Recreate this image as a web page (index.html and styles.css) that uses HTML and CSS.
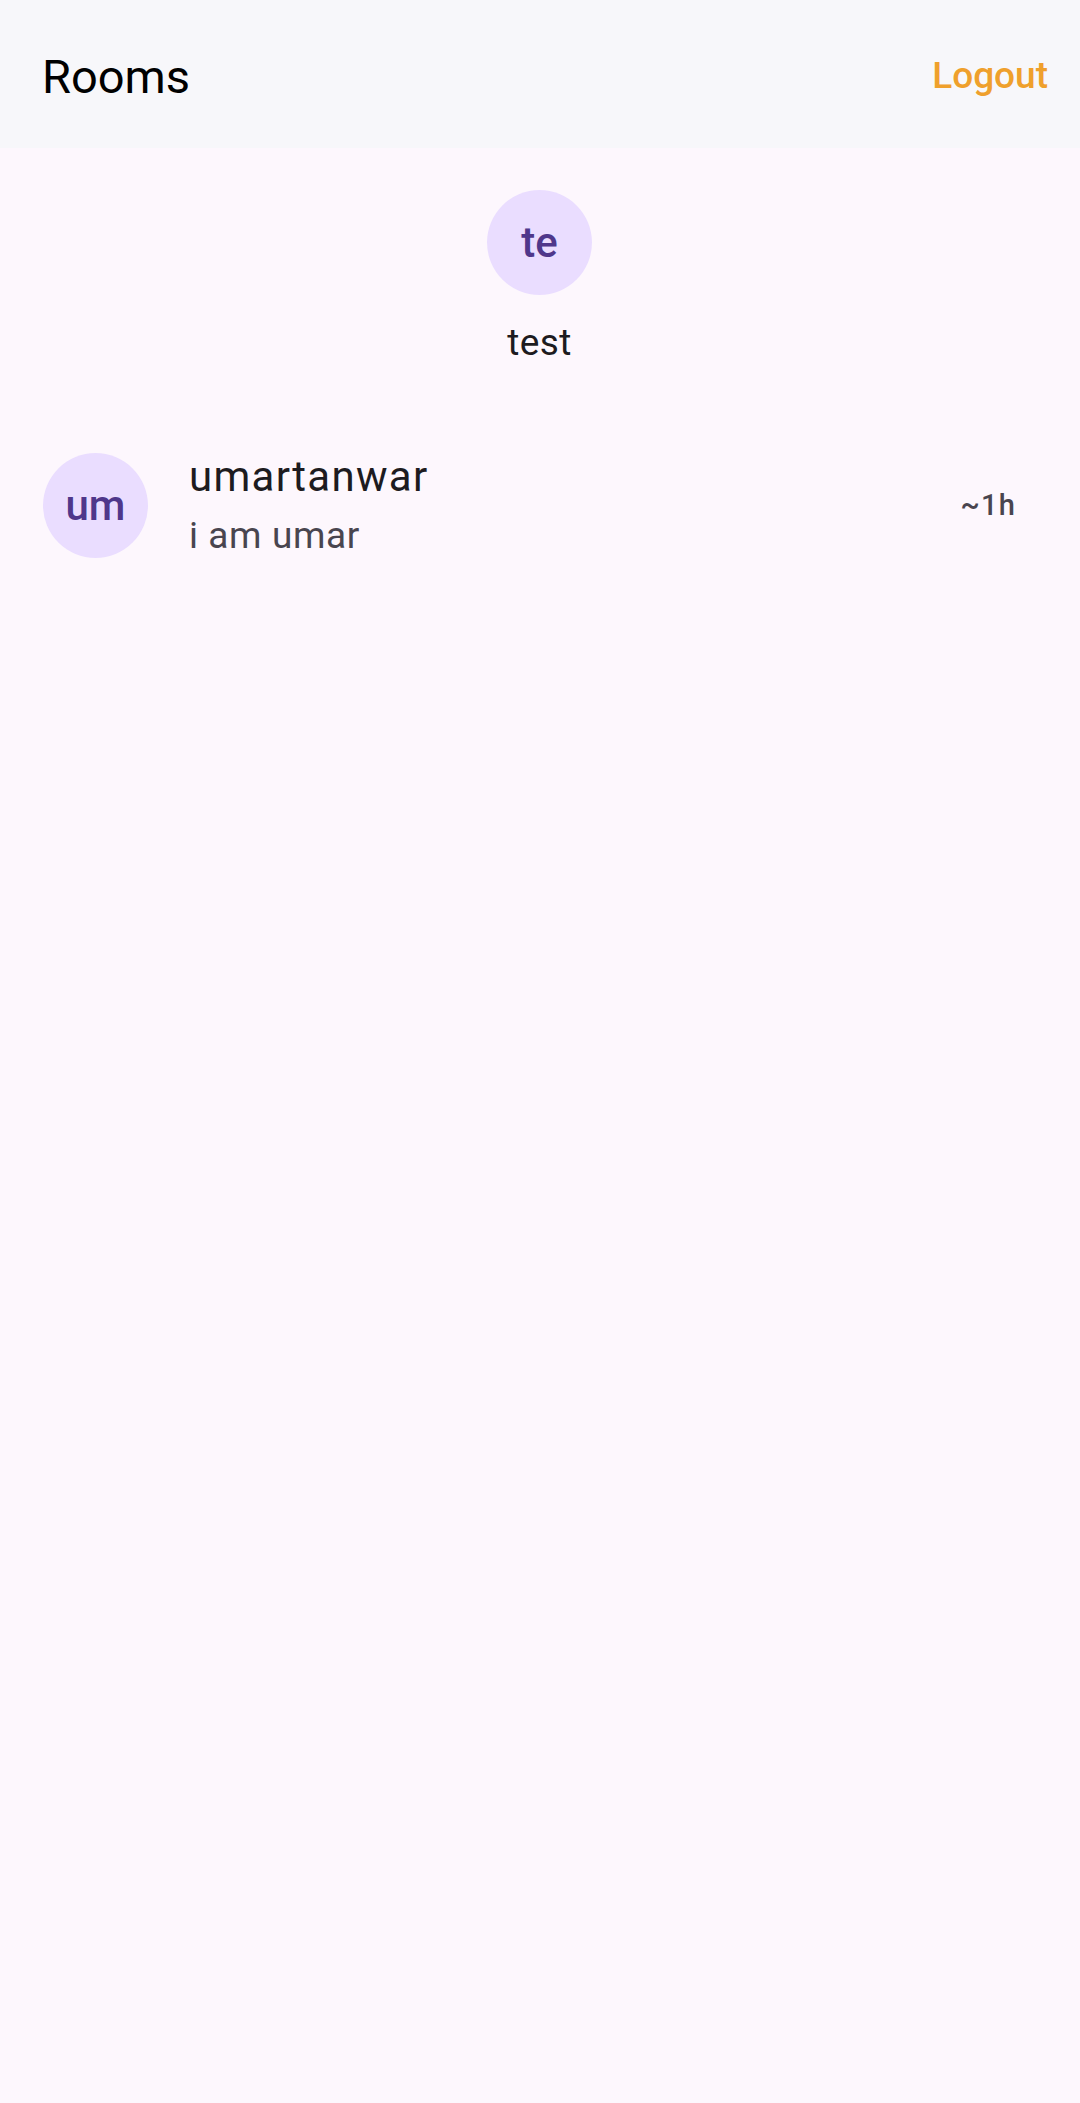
FILE: index.html
```html
<!DOCTYPE html>
<html lang="en">
<head>
<meta charset="utf-8">
<title>Rooms</title>
<link rel="stylesheet" href="styles.css">
</head>
<body>
<header class="app-bar">
  <h1 class="app-title">Rooms</h1>
  <button class="logout">Logout</button>
</header>
<main class="content">
  <section class="stories">
    <div class="story">
      <div class="avatar">te</div>
      <div class="story-name">test</div>
    </div>
  </section>
  <ul class="rooms">
    <li class="room">
      <div class="avatar">um</div>
      <div class="room-text">
        <div class="room-title">umartanwar</div>
        <div class="room-sub">i am umar</div>
      </div>
      <div class="room-time">~1h</div>
    </li>
  </ul>
</main>
</body>
</html>
```
FILE: styles.css
```css
html, body {
  margin: 0;
  padding: 0;
}
body {
  width: 1080px;
  min-height: 2103px;
  background: #fdf7fd;
  font-family: Roboto, "Noto Sans", sans-serif;
  color: #1d1b20;
}
.app-bar {
  height: 148px;
  box-sizing: border-box;
  background: #f7f7fa;
  display: flex;
  align-items: center;
  justify-content: space-between;
  padding: 0 32px 0 42px;
}
.app-title {
  margin: 0;
  padding-top: 4px;
  font-size: 47px;
  font-weight: 400;
  color: #000;
}
.logout {
  border: 0;
  background: transparent;
  padding: 3px 0 0;
  font-family: inherit;
  font-size: 37px;
  font-weight: 500;
  color: #efa02c;
}
.content {
  display: flex;
  flex-direction: column;
}
.stories {
  display: flex;
  justify-content: center;
  padding-top: 42px;
  padding-right: 1px;
}
.story {
  display: flex;
  flex-direction: column;
  align-items: center;
  gap: 26px;
}
.avatar {
  width: 105px;
  height: 105px;
  border-radius: 50%;
  background: #eaddff;
  color: #4f378b;
  display: flex;
  align-items: center;
  justify-content: center;
  font-size: 42px;
  font-weight: 500;
  flex: none;
}
.story-name {
  font-size: 37px;
  line-height: 43px;
  letter-spacing: 0.4px;
  color: #1d1b20;
}
.rooms {
  list-style: none;
  margin: 0;
  padding: 88px 0 0;
}
.room {
  display: flex;
  align-items: center;
  padding: 0 64px 0 43px;
}
.room-text {
  flex: 1;
  margin-left: 41px;
  display: flex;
  flex-direction: column;
  gap: 12px;
}
.room-title {
  font-size: 42px;
  line-height: 50px;
  letter-spacing: 1.3px;
  color: #1d1b20;
}
.room-sub {
  font-size: 37px;
  line-height: 44px;
  letter-spacing: 0.6px;
  color: #49454f;
}
.room-time {
  padding-bottom: 1px;
  font-size: 29px;
  font-weight: 500;
  letter-spacing: 1.2px;
  color: #49454f;
}
```
